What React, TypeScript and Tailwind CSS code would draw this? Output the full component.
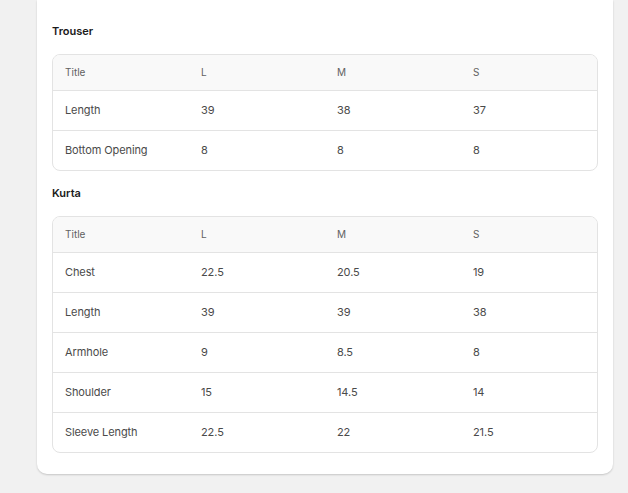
import React from 'react';

type Chart = {
  name: string;
  rows: [string, string, string, string][];
};

const charts: Chart[] = [
  {
    name: 'Trouser',
    rows: [
      ['Length', '39', '38', '37'],
      ['Bottom Opening', '8', '8', '8'],
    ],
  },
  {
    name: 'Kurta',
    rows: [
      ['Chest', '22.5', '20.5', '19'],
      ['Length', '39', '39', '38'],
      ['Armhole', '9', '8.5', '8'],
      ['Shoulder', '15', '14.5', '14'],
      ['Sleeve Length', '22.5', '22', '21.5'],
    ],
  },
];

function SizeTable({ chart }: { chart: Chart }) {
  return (
    <div className="border border-[#e3e3e3] rounded-lg overflow-hidden">
      <table className="w-full table-fixed border-collapse">
        <thead>
          <tr className="bg-[#f9f9f9] h-[35px]">
            {['Title', 'L', 'M', 'S'].map(h => (
              <th key={h} className="text-left font-normal text-[10px] text-[#616161] pl-3">
                {h}
              </th>
            ))}
          </tr>
        </thead>
        <tbody>
          {chart.rows.map(row => (
            <tr key={row[0]} className="h-[40px] border-t border-[#e3e3e3]">
              {row.map((cell, i) => (
                <td key={i} className="pl-3 text-[11px] tracking-[-0.1px] text-[#4a4a4a]">
                  {cell}
                </td>
              ))}
            </tr>
          ))}
        </tbody>
      </table>
    </div>
  );
}

export default function App() {
  return (
    <div className="min-h-[493px] bg-[#f1f1f1] pl-[37px] font-['Inter',sans-serif]">
      <div className="w-[576px] bg-white rounded-b-[10px] shadow-[0_1px_2px_rgba(0,0,0,0.18)] px-[15px] pt-[23px] pb-[21px]">
        {charts.map(chart => (
          <div key={chart.name} className="mb-[14px] last:mb-0">
            <h2 className="text-[11px] leading-4 font-semibold text-[#1a1a1a] mb-[15px]">
              {chart.name}
            </h2>
            <SizeTable chart={chart} />
          </div>
        ))}
      </div>
    </div>
  );
}
